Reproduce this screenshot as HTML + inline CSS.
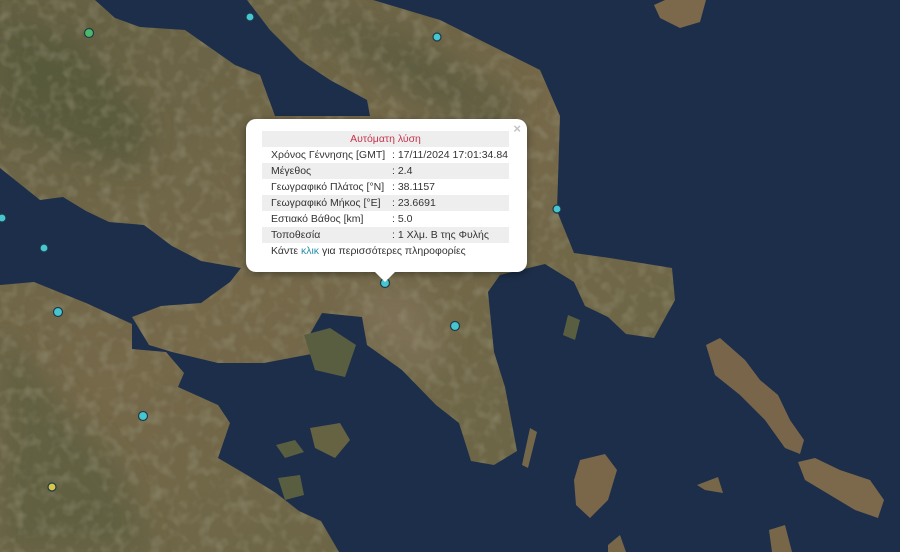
<!DOCTYPE html>
<html><head><meta charset="utf-8"><style>
html,body{margin:0;padding:0;width:900px;height:552px;overflow:hidden;background:#1c2e4a}
svg{position:absolute;left:0;top:0}
.pop{position:absolute;left:246px;top:119px;width:281px;height:153px;background:#fff;border-radius:10px;box-shadow:0 2px 8px rgba(0,0,0,.4);font-family:"Liberation Sans","DejaVu Sans",sans-serif;font-size:10.5px;color:#333}
.x{position:absolute;right:6px;top:2px;color:#c3c3c3;font-size:13px;font-weight:bold}
.tbl{position:absolute;left:16px;top:12px;width:247px}
.r{height:16px;line-height:16px;position:relative;white-space:nowrap}
.g{background:#eeeeee}
.r .v{position:absolute;left:130px}
.r .l{position:absolute;left:9px}
.t{text-align:center;color:#c8344a}
.tip{position:absolute;left:374px;top:271px;width:0;height:0;border-left:11px solid transparent;border-right:11px solid transparent;border-top:11px solid #fff}
</style></head><body>
<svg width="900" height="552" viewBox="0 0 900 552">
<defs>
<linearGradient id="lg" x1="0" y1="0" x2="1" y2="1">
<stop offset="0" stop-color="#646043"/><stop offset=".4" stop-color="#76694a"/><stop offset=".7" stop-color="#6c6646"/><stop offset="1" stop-color="#7d6c4d"/></linearGradient>
<filter id="b"><feGaussianBlur stdDeviation="14"/></filter>
<filter id="tx" x="0" y="0" width="100%" height="100%"><feTurbulence type="fractalNoise" baseFrequency="0.08" numOctaves="2" seed="3"/><feColorMatrix type="matrix" values="0 0 0 0 0.3  0 0 0 0 0.28  0 0 0 0 0.18  0 0 0 1.2 -0.55"/></filter>
<clipPath id="land">
<path d="M0,168 L40,200 L63,197 L86,211 L109,222 L144,225 L172,246 L201,261 L241,268 L230,282 L201,303 L161,306 L132,317 L149,345 L172,352 L218,363 L264,363 L322,352 L310,334 L322,313 L362,317 L367,345 L402,370 L436,405 L459,423 L471,461 L494,465 L517,451 L505,387 L494,352 L488,292 L500,275 L545,264 L574,282 L585,306 L608,317 L626,334 L654,338 L675,300 L672,268 L610,258 L574,253 L557,211 L560,116 L540,70 L480,40 L440,20 L373,0 L247,0 L270,30 L300,60 L330,80 L367,100 L370,116 L275,116 L260,75 L235,65 L185,30 L140,27 L115,18 L95,0 L0,0 Z"/>
<path d="M0,285 L34,282 L86,303 L132,324 L132,349 L166,352 L184,373 L178,387 L218,405 L230,423 L218,458 L247,475 L276,493 L299,511 L321,521 L339,552 L0,552 Z"/>
</clipPath>
</defs>
<rect width="900" height="552" fill="#1c2e4a"/>
<g clip-path="url(#land)">
<rect width="900" height="552" fill="url(#lg)"/>
<g filter="url(#b)">
<path d="M0,20 L80,40 L150,120 L140,170 L60,150 L0,120Z" fill="#4f5538" opacity=".6"/>
<path d="M0,330 L60,400 L120,470 L150,552 L0,552Z" fill="#555a3c" opacity=".6"/>
<path d="M300,10 L420,40 L520,100 L500,140 L400,90 Z" fill="#55583a" opacity=".6"/>
<path d="M340,290 L420,290 L445,340 L430,380 L380,350Z" fill="#8c7d66" opacity=".45"/>
</g>
<rect width="900" height="552" filter="url(#tx)"/>
</g>
<path d="M304,335 L330,328 L356,345 L345,377 L315,370 Z" fill="#5a5e40"/>
<path d="M310,428 L340,423 L350,440 L335,458 L315,448 Z" fill="#666343"/>
<path d="M276,445 L295,440 L304,452 L285,458Z" fill="#5a5e40"/>
<path d="M278,478 L300,475 L304,495 L285,500Z" fill="#5a5e40"/>
<path d="M706,345 L720,338 L745,360 L760,380 L778,395 L790,420 L804,440 L800,454 L785,448 L765,420 L740,395 L715,375 Z" fill="#79664a"/>
<path d="M798,462 L815,458 L840,470 L870,480 L884,500 L878,518 L855,510 L830,495 L805,480Z" fill="#7c684b"/>
<path d="M580,460 L605,454 L617,470 L608,500 L590,518 L576,505 L574,480Z" fill="#7a6649"/>
<path d="M697,485 L718,477 L723,493 L705,490Z" fill="#786649"/>
<path d="M530,428 L537,432 L528,468 L522,465Z" fill="#756749"/>
<path d="M769,530 L785,525 L792,552 L772,552Z" fill="#786649"/>
<path d="M608,545 L620,535 L626,552 L608,552Z" fill="#786649"/>
<path d="M654,5 L665,0 L706,0 L700,22 L680,28 L660,18Z" fill="#7c684b"/>
<path d="M568,315 L580,320 L575,340 L563,335Z" fill="#5a5e40"/>
<g stroke="#1f3a46" stroke-width="1.2" fill="#46c6d0">
<circle cx="250" cy="17" r="4"/><circle cx="437" cy="37" r="4"/><circle cx="557" cy="209" r="4"/>
<circle cx="2" cy="218" r="4"/><circle cx="44" cy="248" r="4"/><circle cx="58" cy="312" r="4.5"/>
<circle cx="385" cy="283" r="4.5"/><circle cx="455" cy="326" r="4.5"/><circle cx="143" cy="416" r="4.5"/>
<circle cx="89" cy="33" r="4.5" fill="#4cb86a"/><circle cx="52" cy="487" r="4" fill="#d8c64a"/>
</g>
</svg>
<div class="pop">
<div class="x">×</div>
<div class="tbl">
<div class="r g t">Αυτόματη λύση</div>
<div class="r"><span class="l">Χρόνος Γέννησης [GMT]</span><span class="v">: 17/11/2024 17:01:34.84</span></div>
<div class="r g"><span class="l">Μέγεθος</span><span class="v">: 2.4</span></div>
<div class="r"><span class="l">Γεωγραφικό Πλάτος [°N]</span><span class="v">: 38.1157</span></div>
<div class="r g"><span class="l">Γεωγραφικό Μήκος [°E]</span><span class="v">: 23.6691</span></div>
<div class="r"><span class="l">Εστιακό Βάθος [km]</span><span class="v">: 5.0</span></div>
<div class="r g"><span class="l">Τοποθεσία</span><span class="v">: 1 Χλμ. Β της Φυλής</span></div>
<div class="r"><span class="l">Κάντε <span style="color:#2a8fb0">κλικ</span> για περισσότερες πληροφορίες</span></div>
</div>
</div>
<div class="tip"></div>
</body></html>
